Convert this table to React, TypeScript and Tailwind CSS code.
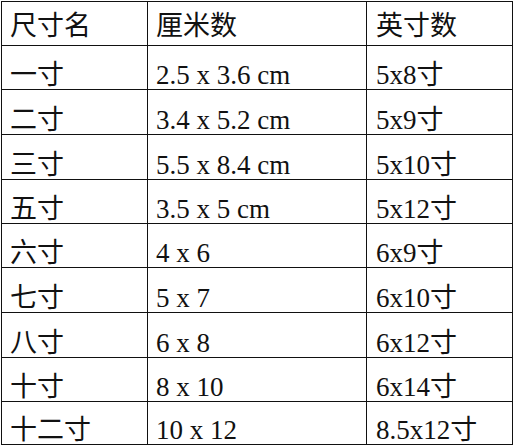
import React from "react";

const rows: { h: string; cells: [string, string, string] }[] = [
  { h: "h-[44px]", cells: ["一寸", "2.5 x 3.6 cm", "5x8寸"] },
  { h: "h-[45px]", cells: ["二寸", "3.4 x 5.2 cm", "5x9寸"] },
  { h: "h-[45px]", cells: ["三寸", "5.5 x 8.4 cm", "5x10寸"] },
  { h: "h-[44px]", cells: ["五寸", "3.5 x 5 cm", "5x12寸"] },
  { h: "h-[44px]", cells: ["六寸", "4 x 6", "6x9寸"] },
  { h: "h-[45px]", cells: ["七寸", "5 x 7", "6x10寸"] },
  { h: "h-[45px]", cells: ["八寸", "6 x 8", "6x12寸"] },
  { h: "h-[44px]", cells: ["十寸", "8 x 10", "6x14寸"] },
  { h: "h-[43px]", cells: ["十二寸", "10 x 12", "8.5x12寸"] },
];

const font = {
  fontFamily: '"Liberation Serif", "Noto Sans CJK SC", serif',
};

export default function App() {
  return (
    <div className="w-[515px] h-[446px] bg-white overflow-hidden">
      <div
        className="ml-[1px] mt-[1px] w-[512px] border-l border-t border-[#111] text-[27px] leading-[27px] text-[#111]"
        style={font}
      >
        <div className="flex h-[44px] border-b border-[#111]">
          <div className="w-[146px] border-r border-[#111] flex items-end pl-[8px] pb-[5px]">尺寸名</div>
          <div className="w-[219px] border-r border-[#111] flex items-end pl-[8px] pb-[5px]">厘米数</div>
          <div className="w-[146px] border-r border-[#111] flex items-end pl-[9px] pb-[5px]">英寸数</div>
        </div>
        {rows.map((r, i) => (
          <div key={i} className={`flex ${r.h} border-b border-[#111]`}>
            <div className="w-[146px] border-r border-[#111] flex items-end pl-[8px] whitespace-nowrap">
              {r.cells[0]}
            </div>
            <div className="w-[219px] border-r border-[#111] flex items-end pl-[8px] whitespace-nowrap">
              {r.cells[1]}
            </div>
            <div className="w-[146px] border-r border-[#111] flex items-end pl-[9px] whitespace-nowrap">
              {r.cells[2]}
            </div>
          </div>
        ))}
      </div>
    </div>
  );
}
